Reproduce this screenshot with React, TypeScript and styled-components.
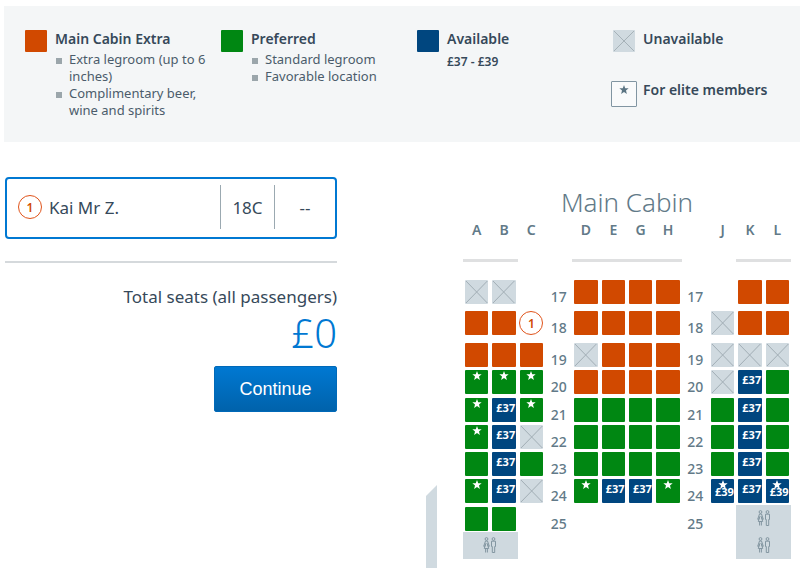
import React from "react";
import styled, { createGlobalStyle, css } from "styled-components";

const color = {
  extra: "#d14900",
  preferred: "#008712",
  available: "#00467f",
  unavailable: "#d0dae0",
  ink: "#36495a",
  slate: "#627a88",
  blue: "#0078d2",
};

const GlobalStyle = createGlobalStyle`
  * { box-sizing: border-box; }
  body {
    margin: 0;
    background: #fff;
    color: ${color.ink};
    font-family: "Noto Sans", "Open Sans", sans-serif;
  }
  button { font-family: inherit; color: inherit; }
`;

type Kind = "extra" | "preferred" | "available" | "unavailable";

const Page = styled.div`
  display: flex;
  flex-direction: column;
  min-height: 100vh;
`;

const Legend = styled.section`
  display: grid;
  grid-template-columns: repeat(3, 196px) 1fr;
  margin: 6px 0 0 4px;
  padding: 24px 0 20px 21px;
  min-height: 136px;
  background: #f4f6f7;
`;

const LegendColumn = styled.div`
  display: flex;
  flex-direction: column;
  gap: 29px;
`;

const LegendItem = styled.div`
  display: flex;
  align-items: flex-start;
  gap: 8px;
`;

const Swatch = styled.span<{ $kind: Kind }>`
  flex: none;
  display: block;
  width: 22px;
  height: 22px;
  border-radius: 1px;
  background: ${(p) => color[p.$kind]};
`;

const EliteSwatch = styled.span`
  flex: none;
  display: flex;
  justify-content: center;
  width: 26px;
  height: 26px;
  margin: 0 -2px;
  padding-top: 3px;
  border: 1px solid #8195a2;
  border-radius: 1px;
  color: #5b7483;
  background: #f9fafb;
`;

const LegendTitle = styled.h3`
  margin: 0;
  font-size: 14px;
  line-height: 18px;
  font-weight: 600;
  white-space: nowrap;
`;

const LegendList = styled.ul`
  margin: 3px 0 0;
  padding: 0;
  list-style: none;
`;

const LegendPoint = styled.li`
  display: flex;
  gap: 7px;
  width: 156px;
  color: #4b5c6b;
  font-size: 13px;
  line-height: 17px;
  &::before {
    content: "";
    flex: none;
    width: 6px;
    height: 6px;
    margin: 7px 0 0 1px;
    background: #9ba6ab;
  }
`;

const PriceRange = styled.p`
  margin: 5px 0 0;
  font-size: 12px;
  line-height: 18px;
  font-weight: 600;
`;

const Main = styled.main`
  flex: 1;
  display: grid;
  grid-template-columns: 421fr 11px 354fr;
  padding: 0 9px 0 5px;
`;

const Summary = styled.section`
  display: flex;
  flex-direction: column;
  align-items: flex-end;
  padding-top: 35px;
  margin-right: 89px;
`;

const Passenger = styled.button`
  display: flex;
  align-items: center;
  width: 100%;
  height: 62px;
  padding: 0 0 2px;
  border: 2px solid ${color.blue};
  border-radius: 4px;
  background: #fff;
  font-size: 17px;
  cursor: pointer;
`;

const Badge = styled.span`
  display: flex;
  align-items: center;
  justify-content: center;
  width: 24px;
  height: 24px;
  border: 1px solid #e0531a;
  border-radius: 50%;
  background: #fff;
  color: ${color.extra};
  font-size: 12px;
  font-weight: 600;
`;

const PassengerName = styled.span`
  flex: 1;
  display: flex;
  align-items: center;
  gap: 7px;
  padding-left: 11px;
`;

const PassengerCell = styled.span<{ $wide?: boolean }>`
  display: flex;
  align-items: center;
  justify-content: center;
  width: ${(p) => (p.$wide ? 61 : 54)}px;
  height: 44px;
  border-left: 1px solid #9ba9b1;
`;

const Divider = styled.hr`
  width: 100%;
  margin: 22px 0;
  border: 0;
  border-top: 2px solid #d5d9dc;
`;

const TotalLabel = styled.p`
  margin: 0;
  font-size: 17px;
  line-height: 24px;
`;

const TotalPrice = styled.p`
  margin: 0;
  color: ${color.blue};
  font-size: 40px;
  line-height: 48px;
  font-weight: 300;
`;

const Continue = styled.button`
  width: 123px;
  height: 46px;
  margin-top: 9px;
  border: 1px solid #0069b8;
  border-radius: 2px;
  background: linear-gradient(#0078d2, #0062ab);
  color: #fff;
  font-family: "Liberation Sans", Arial, sans-serif;
  font-size: 18px;
  cursor: pointer;
`;

const Wing = styled.div`
  margin-top: 343px;
  background: ${color.unavailable};
  clip-path: polygon(0 11px, 100% 0, 100% 100%, 0 100%);
`;

const Cabin = styled.section`
  margin-left: 26px;
  padding: 43px 0 9px;
`;

const CabinTitle = styled.h2`
  margin: 0;
  color: ${color.slate};
  font-size: 26px;
  line-height: 35px;
  font-weight: 300;
  text-align: center;
`;

const seatColumns = css`
  display: grid;
  grid-template-columns: repeat(12, minmax(0, 1fr));
`;

const Letters = styled.div`
  ${seatColumns}
  color: ${color.slate};
  font-size: 14px;
  line-height: 20px;
  font-weight: 600;
  text-align: center;
`;

const Bars = styled.div`
  ${seatColumns}
  margin: 19px 0 16px;
`;

const Bar = styled.span<{ $from: number; $span: number }>`
  grid-column: ${(p) => p.$from} / span ${(p) => p.$span};
  height: 3px;
  background: #dfe0e1;
`;

const SeatGrid = styled.div`
  ${seatColumns}
  grid-template-rows: 31px 32px repeat(8, minmax(0, 1fr));
  height: 281px;
`;

const SeatButton = styled.button<{ $kind: Kind }>`
  position: relative;
  display: block;
  height: 24px;
  margin: 2px 2px 0;
  padding: 0;
  border: 0;
  border-radius: 1px;
  background: ${(p) => color[p.$kind]};
  color: #fff;
  overflow: hidden;
  cursor: pointer;
  &:disabled { cursor: default; }
`;

const SeatStar = styled.span`
  position: absolute;
  inset: 1px 0 auto;
  display: flex;
  justify-content: center;
`;

const SeatPrice = styled.span<{ $low: boolean }>`
  position: absolute;
  top: ${(p) => (p.$low ? 5 : 2)}px;
  left: 4px;
  font-size: 11px;
  line-height: 16px;
  font-weight: 700;
`;

const OwnSeat = styled.span`
  display: flex;
  justify-content: center;
  padding-top: 2px;
`;

const RowNumber = styled.span`
  padding-top: 9px;
  color: ${color.slate};
  font-size: 14px;
  line-height: 20px;
  font-weight: 500;
  text-align: center;
`;

const Lavatory = styled.div<{ $column: number; $row: number; $rows: number }>`
  grid-column: ${(p) => p.$column} / span 2;
  grid-row: ${(p) => p.$row} / span ${(p) => p.$rows};
  display: flex;
  flex-direction: column;
  align-items: center;
  justify-content: space-around;
  background: #cfd9df;
`;

const Cross = styled.svg`
  display: block;
  width: 100%;
  height: 100%;
`;

const CrossMark = () => (
  <Cross viewBox="0 0 24 24" preserveAspectRatio="none" aria-hidden="true">
    <path d="M1 1 23 23M23 1 1 23" stroke="#a1adb4" strokeWidth="1" fill="none" />
  </Cross>
);

const Star = () => (
  <svg width="10" height="9" viewBox="0 0 20 19" aria-hidden="true">
    <path
      d="M10 0l2.6 6.7 7.2.4-5.6 4.5L16.1 19 10 14.8 3.9 19l1.9-7.4L.2 7.1l7.2-.4z"
      fill="currentColor"
    />
  </svg>
);

const Restroom = () => (
  <svg width="14" height="16" viewBox="0 0 14 16" role="img" aria-label="Lavatory">
    <g fill="none" stroke="#8396a1" strokeWidth="1">
      <circle cx="3.5" cy="2" r="1.4" />
      <path d="M2.5 4h2l1.8 5.3-.8.4-1.3-3.2 1.5 5H1.3l1.5-5-1.3 3.2-.8-.4zM2.6 11.5v4M4.4 11.5v4" />
      <circle cx="10.5" cy="2" r="1.4" />
      <path d="M8.5 4.2h4v5.3h-.8v6H9.3v-6h-.8z" />
    </g>
  </svg>
);

const LETTERS = ["A", "B", "C", "", "D", "E", "G", "H", "", "J", "K", "L"];

/*
 * One character per column, aisles included.
 * x: Main Cabin Extra   p: Preferred   P: Preferred, elite   u: unavailable
 * 7: available at 37    9: available at 39, elite   1: passenger 1
 * #: row number         .: no seat
 */
const ROWS: [number, string][] = [
  [17, "uu.#xxxx#.xx"],
  [18, "xx1#xxxx#uxx"],
  [19, "xxx#uxxx#uuu"],
  [20, "PPP#xxxx#u7p"],
  [21, "P7P#pppp#p7p"],
  [22, "P7u#pppp#p7p"],
  [23, "p7p#pppp#p7p"],
  [24, "P7u#P77P#979"],
  [25, "pp.#....#"],
];

const KINDS: Record<string, Kind> = {
  x: "extra",
  p: "preferred",
  P: "preferred",
  u: "unavailable",
  "7": "available",
  "9": "available",
};

function Cell({ row, column, code }: { row: number; column: number; code: string }) {
  if (code === "#") return <RowNumber>{row}</RowNumber>;
  if (code === ".") return <span />;
  if (code === "1")
    return (
      <OwnSeat>
        <Badge>1</Badge>
      </OwnSeat>
    );
  const elite = code === "P" || code === "9";
  return (
    <SeatButton
      $kind={KINDS[code]}
      disabled={code === "u"}
      aria-label={`Seat ${row}${LETTERS[column]}, ${KINDS[code]}`}
    >
      {code === "u" && <CrossMark />}
      {elite && (
        <SeatStar>
          <Star />
        </SeatStar>
      )}
      {code === "7" && <SeatPrice $low={false}>£37</SeatPrice>}
      {code === "9" && <SeatPrice $low>£39</SeatPrice>}
    </SeatButton>
  );
}

export default function App() {
  return (
    <Page>
      <GlobalStyle />
      <Legend aria-label="Seat types">
        <LegendItem>
          <Swatch $kind="extra" />
          <div>
            <LegendTitle>Main Cabin Extra</LegendTitle>
            <LegendList>
              <LegendPoint>Extra legroom (up to 6 inches)</LegendPoint>
              <LegendPoint>Complimentary beer, wine and spirits</LegendPoint>
            </LegendList>
          </div>
        </LegendItem>
        <LegendItem>
          <Swatch $kind="preferred" />
          <div>
            <LegendTitle>Preferred</LegendTitle>
            <LegendList>
              <LegendPoint>Standard legroom</LegendPoint>
              <LegendPoint>Favorable location</LegendPoint>
            </LegendList>
          </div>
        </LegendItem>
        <LegendItem>
          <Swatch $kind="available" />
          <div>
            <LegendTitle>Available</LegendTitle>
            <PriceRange>£37 - £39</PriceRange>
          </div>
        </LegendItem>
        <LegendColumn>
          <LegendItem>
            <Swatch $kind="unavailable">
              <CrossMark />
            </Swatch>
            <LegendTitle>Unavailable</LegendTitle>
          </LegendItem>
          <LegendItem>
            <EliteSwatch>
              <Star />
            </EliteSwatch>
            <LegendTitle>For elite members</LegendTitle>
          </LegendItem>
        </LegendColumn>
      </Legend>

      <Main>
        <Summary>
          <Passenger>
            <PassengerName>
              <Badge>1</Badge>
              Kai Mr Z.
            </PassengerName>
            <PassengerCell>18C</PassengerCell>
            <PassengerCell $wide>--</PassengerCell>
          </Passenger>
          <Divider />
          <TotalLabel>Total seats (all passengers)</TotalLabel>
          <TotalPrice>£0</TotalPrice>
          <Continue>Continue</Continue>
        </Summary>
        <Wing />
        <Cabin>
          <CabinTitle>Main Cabin</CabinTitle>
          <Letters>
            {LETTERS.map((letter, i) => (
              <span key={i}>{letter}</span>
            ))}
          </Letters>
          <Bars>
            <Bar $from={1} $span={2} />
            <Bar $from={5} $span={4} />
            <Bar $from={11} $span={2} />
          </Bars>
          <SeatGrid>
            {ROWS.map(([row, codes]) =>
              codes
                .split("")
                .map((code, i) => <Cell key={`${row}-${i}`} row={row} column={i} code={code} />)
            )}
            <Lavatory $column={1} $row={10} $rows={1}>
              <Restroom />
            </Lavatory>
            <Lavatory $column={11} $row={9} $rows={2}>
              <Restroom />
              <Restroom />
            </Lavatory>
          </SeatGrid>
        </Cabin>
      </Main>
    </Page>
  );
}
